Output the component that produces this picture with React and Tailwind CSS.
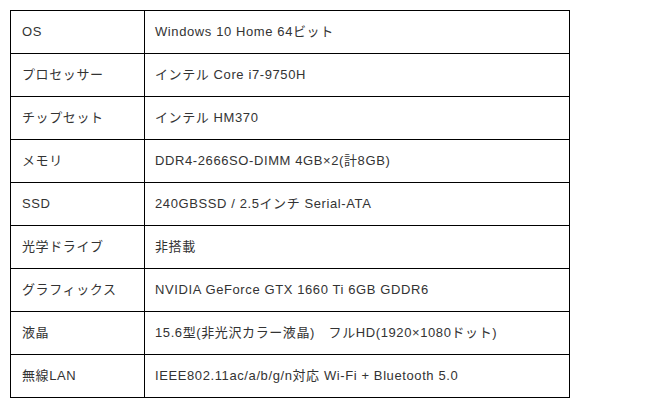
import React from "react";

const rows = [
  ["OS", "Windows 10 Home 64ビット"],
  ["プロセッサー", "インテル Core i7-9750H"],
  ["チップセット", "インテル HM370"],
  ["メモリ", "DDR4-2666SO-DIMM 4GB×2(計8GB)"],
  ["SSD", "240GBSSD / 2.5インチ Serial-ATA"],
  ["光学ドライブ", "非搭載"],
  ["グラフィックス", "NVIDIA GeForce GTX 1660 Ti 6GB GDDR6"],
  ["液晶", "15.6型(非光沢カラー液晶)　フルHD(1920×1080ドット)"],
  ["無線LAN", "IEEE802.11ac/a/b/g/n対応 Wi-Fi + Bluetooth 5.0"],
];

export default function App() {
  return (
    <div className="w-[647px] h-[408px] bg-white pt-[10px] pl-[10px] font-['Liberation_Sans','Noto_Sans_CJK_JP',sans-serif] text-[13px] tracking-[0.6px] text-[#333]">
      <table className="border-collapse w-[560px]">
        <tbody>
          {rows.map(([k, v]) => (
            <tr key={k} className="h-[43px]">
              <td className="w-[134px] border border-black px-[11px] align-middle">{k}</td>
              <td className="border border-black px-[10px] align-middle">{v}</td>
            </tr>
          ))}
        </tbody>
      </table>
    </div>
  );
}
